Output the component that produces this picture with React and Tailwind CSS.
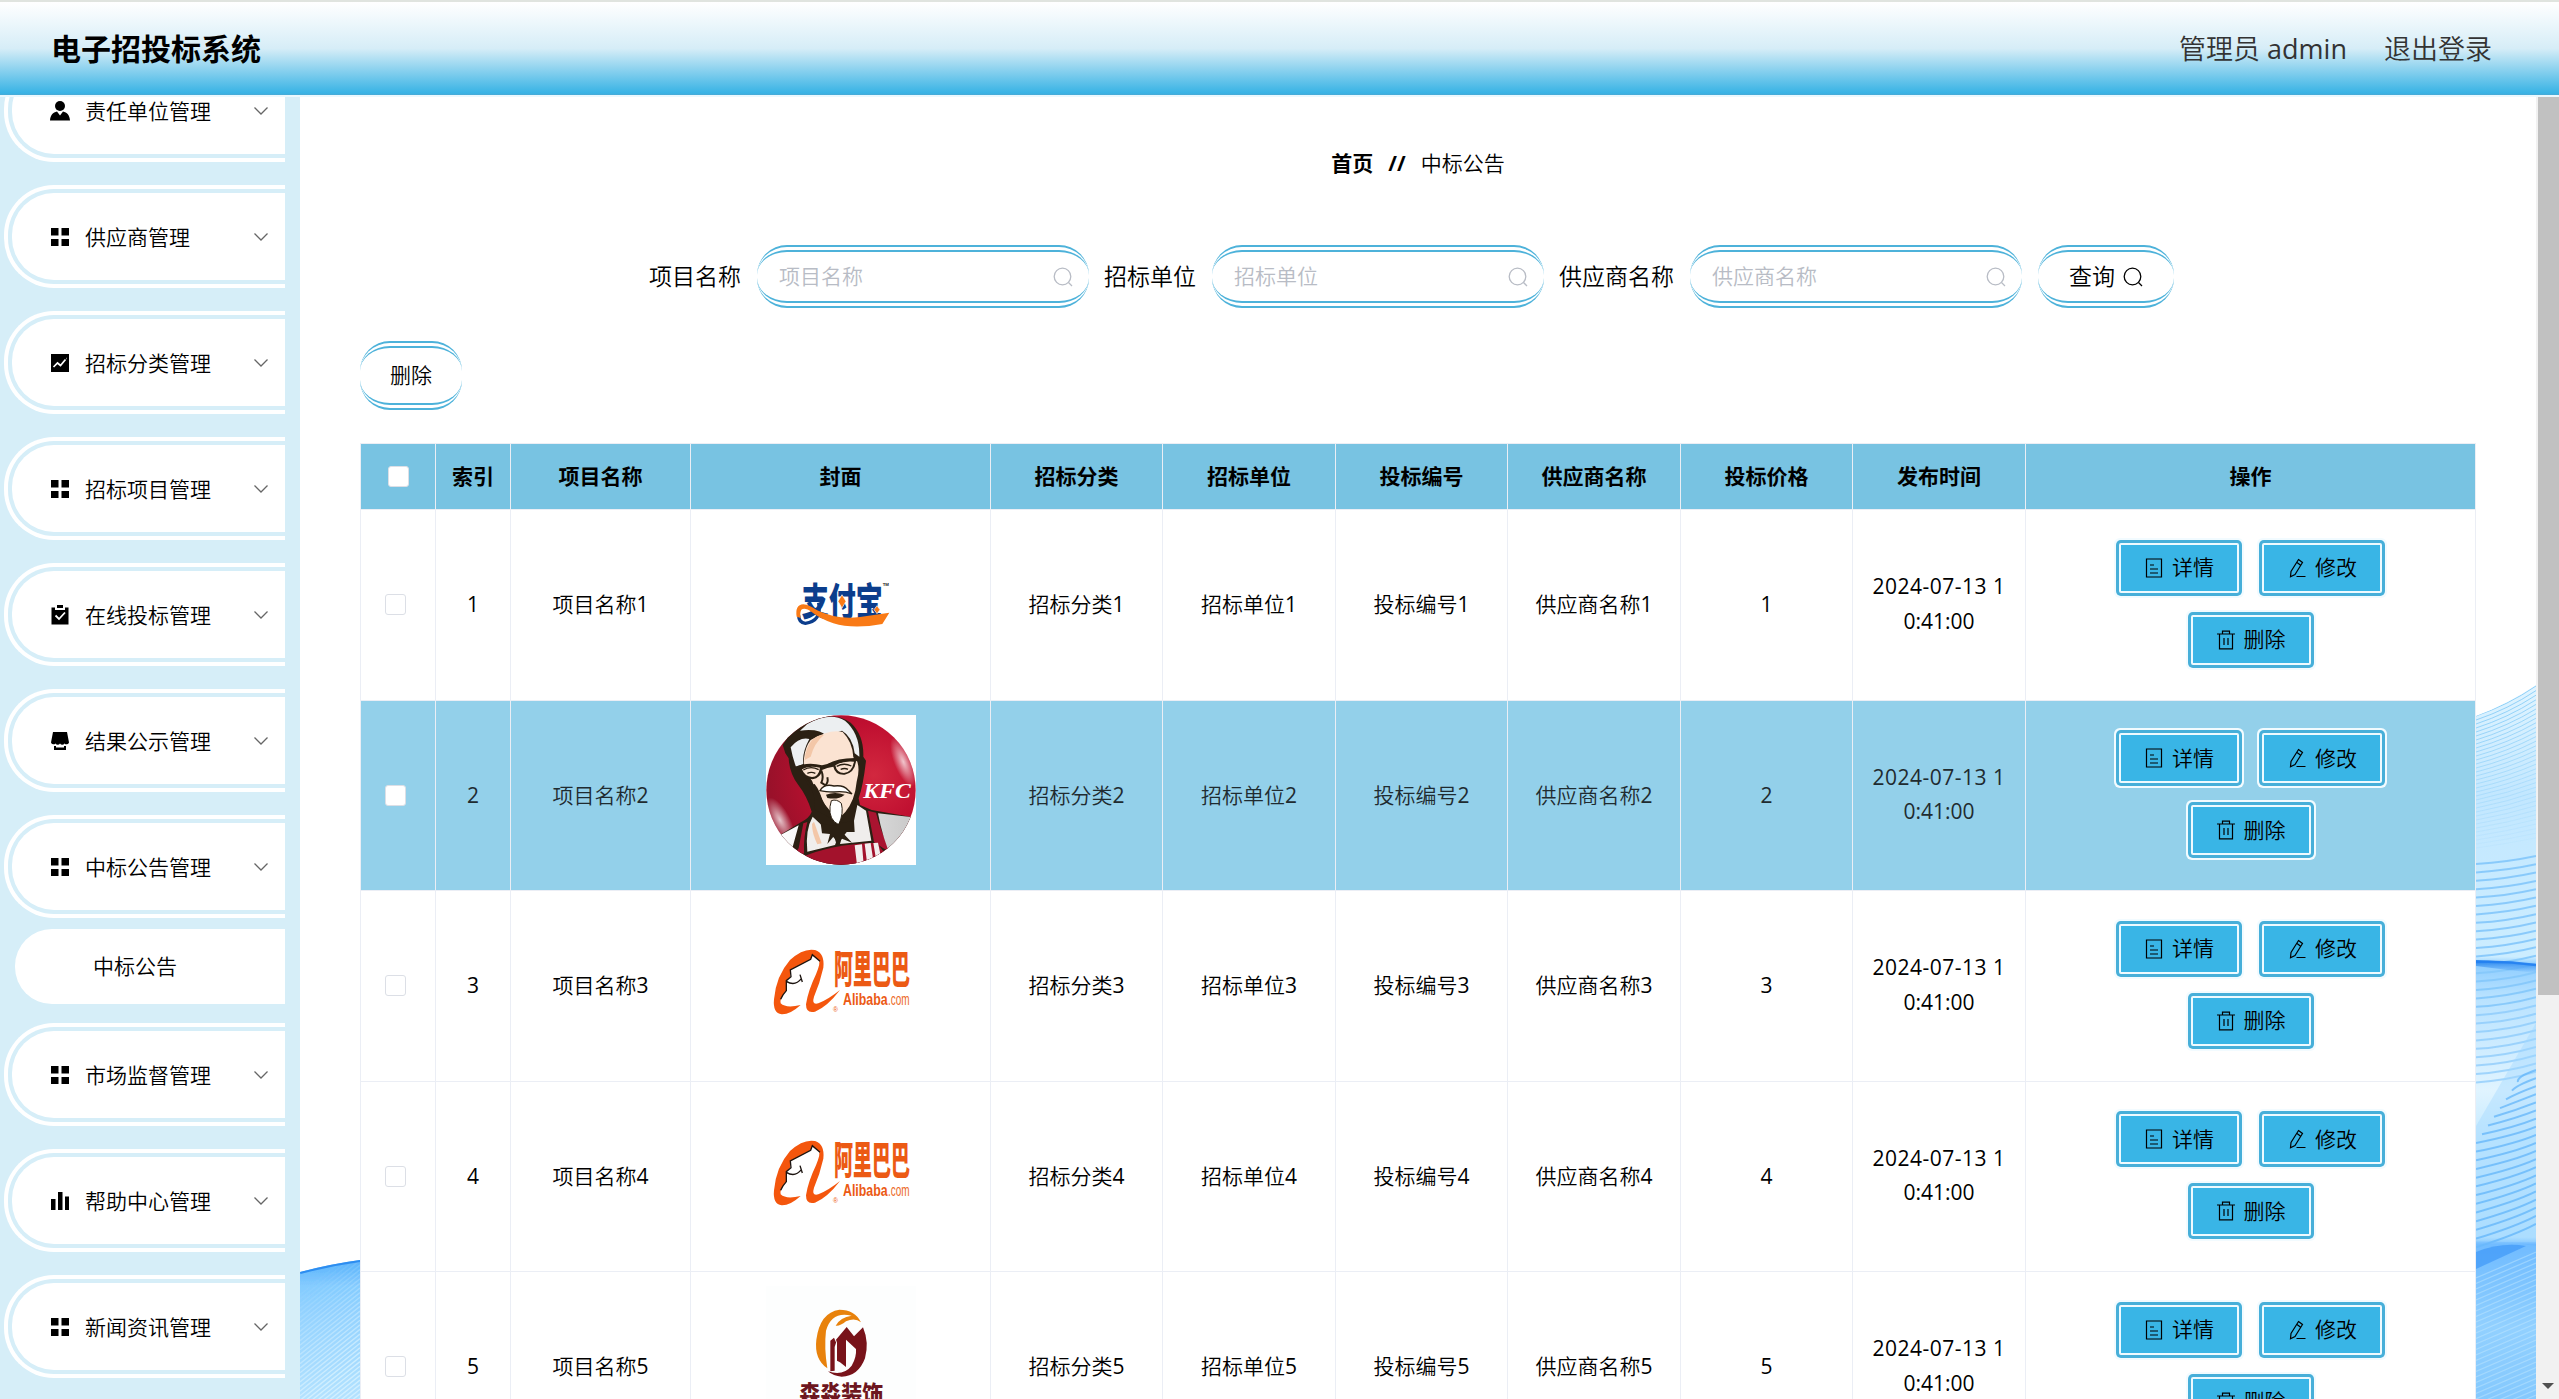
import React from "react";

const MENU = [
  { label: "责任单位管理", icon: "user" },
  { label: "供应商管理", icon: "grid" },
  { label: "招标分类管理", icon: "trend" },
  { label: "招标项目管理", icon: "grid" },
  { label: "在线投标管理", icon: "claim" },
  { label: "结果公示管理", icon: "shop" },
  { label: "中标公告管理", icon: "grid", child: "中标公告" },
  { label: "市场监督管理", icon: "grid" },
  { label: "帮助中心管理", icon: "bars" },
  { label: "新闻资讯管理", icon: "grid" },
];

const HEADERS = ["索引", "项目名称", "封面", "招标分类", "招标单位", "投标编号", "供应商名称", "投标价格", "发布时间", "操作"];
const COVERS = [AlipayLogo, KfcLogo, AlibabaLogo, AlibabaLogo, DecorLogo];

function MenuIcon({ name }) {
  return (
    <svg viewBox="0 0 20 20" className="h-5 w-5 shrink-0" fill="#000">
      {name === "user" && (
        <>
          <circle cx="10" cy="5" r="5" />
          <path d="M0 19.5C.3 14 3 11.400 7 10.500l3 4 3-4c4 .9 6.700 3.500 7 9z" />
        </>
      )}
      {name === "grid" && <path d="M1 1h7.500v7.500H1zM11.500 1H19v7.500h-7.500zM1 12h7.500v7H1zM11.500 12H19v7h-7.500z" />}
      {name === "trend" && (
        <>
          <path d="M1 1h18v18H1z" />
          <path d="M3.500 14l4-4 3 2.500 5-6M16 5.500h.5" fill="none" stroke="#fff" strokeWidth="1.700" />
        </>
      )}
      {name === "claim" && (
        <>
          <path d="M1.500 2.500H5V5h10V2.500h3.500V19.500h-17zM7 0h6v3H7z" />
          <path d="M5.500 10.500l3.500 3.500 6-6.500" fill="none" stroke="#fff" strokeWidth="1.800" />
        </>
      )}
      {name === "shop" && (
        <>
          <path d="M3 1h14l2 10.500a2.700 2.700 0 01-4.500 1 2.700 2.700 0 01-4.500 0 2.700 2.700 0 01-4.500 0 2.700 2.700 0 01-4.500-1z" />
          <path d="M4 15h2v1.500h8V15h2v4H4z" />
        </>
      )}
      {name === "bars" && <path d="M1 8h4.500v11H1zM8 1h4.500v18H8zM15 5.500h4V19h-4z" />}
    </svg>
  );
}

function SearchIcon({ className }) {
  return (
    <svg viewBox="0 0 20 20" className={className} fill="none" stroke="currentColor" strokeWidth="1.300">
      <circle cx="9.500" cy="9.500" r="8.300" />
      <path d="M15.500 15.500l3.500 3.500" />
    </svg>
  );
}

function ActionIcon({ name }) {
  return (
    <svg viewBox="0 0 20 20" className="h-5 w-5 shrink-0" fill="none" stroke="currentColor" strokeWidth="1.200">
      {name === "detail" && <path d="M2.500 1h15v18h-15zM6 7h4M6 11h8M6 15h8" />}
      {name === "edit" && <path d="M11.500 1.500l4 3-7.500 12-4.500 2.300.5-5.300zM10 4.500l4 3M9.500 18.500h9" />}
      {name === "delete" && <path d="M1 4h18M6.500 4V1.200h7V4M3.500 4v14.800h13V4M8 8v7M12 8v7" />}
    </svg>
  );
}

function AlipayLogo() {
  return (
    <svg viewBox="138 -46 450 450" className="h-[150px] w-[150px]">
      <text x="245" y="0" transform="translate(0 228) scale(1 1.12)" textLength="243" lengthAdjust="spacingAndGlyphs" fontSize="102" fontWeight="900" fill="#0b3d8c" fontFamily="Noto Sans CJK SC, sans-serif">支付宝</text>
      <path d="M296 190Q306 246 256 252Q236 250 236 228" fill="none" stroke="#0b3d8c" strokeWidth="10" />
      <path d="M230 232Q224 197 250 195Q268 197 290 212Q350 242 420 233L508 220L487 254Q400 270 340 252Q300 238 275 218Q255 203 244 211Q239 220 242 236Z" fill="#f97a16" />
      <path d="M366 166l12 20-12 20-12-20zM471 199l9 12-9 12-9-12z" fill="#f97a16" stroke="#fff" strokeWidth="2" />
      <text x="488" y="139" fontSize="13" fontWeight="700" fill="#222" fontFamily="Liberation Sans, sans-serif">TM</text>
    </svg>
  );
}

function KfcLogo() {
  return (
    <svg viewBox="138 525 450 450" className="h-[150px] w-[150px] bg-white">
      <defs>
        <radialGradient id="kfcRed" cx="0.72" cy="0.4" r="0.7">
          <stop offset="0" stopColor="#d2283f" />
          <stop offset="0.5" stopColor="#bf0f30" />
          <stop offset="1" stopColor="#99112a" />
        </radialGradient>
        <linearGradient id="kfcShirt" x1="0" x2="1">
          <stop offset="0" stopColor="#fff" />
          <stop offset="1" stopColor="#c9c9c9" />
        </linearGradient>
        <radialGradient id="kfcShine" cx="0.5" cy="0.5" r="0.5">
          <stop offset="0" stopColor="#fff" stopOpacity="0.75" />
          <stop offset="1" stopColor="#fff" stopOpacity="0" />
        </radialGradient>
        <clipPath id="kfcClip"><circle cx="363" cy="750" r="224" /></clipPath>
      </defs>
      <g clipPath="url(#kfcClip)">
        <rect x="138" y="525" width="450" height="450" fill="url(#kfcRed)" />
        <ellipse cx="550" cy="665" rx="28" ry="80" fill="url(#kfcShine)" transform="rotate(-22 550 665)" />
        <ellipse cx="180" cy="840" rx="30" ry="75" fill="url(#kfcShine)" transform="rotate(-28 180 840)" />
        <path d="M188 615Q215 565 272 538Q345 515 392 548Q432 585 430 650L438 662Q430 735 416 775L420 795L455 810L578 832V975H180V885L240 848Q268 835 275 815Q262 770 235 735Q208 700 206 655L196 640Z" fill="#2b2013" />
        <path d="M262 552Q330 514 375 542Q420 580 418 650L404 640Q398 590 366 572L318 588Q300 565 240 572Z" fill="#eceff1" />
        <path d="M212 622Q238 590 268 597Q245 640 250 672L228 680Q218 655 212 622Z" fill="#eef0f1" />
        <path d="M272 600Q330 566 368 576Q398 606 400 652L412 665Q420 690 410 725Q405 780 376 816L350 842L318 800L300 765Q282 740 276 722Q248 690 252 655Q256 620 272 600Z" fill="#fbe3d2" />
        <path d="M276 600Q290 585 312 584Q282 610 272 650L254 660Q256 625 276 600Z" fill="#f3c7a8" />
        <path d="M222 682Q262 664 306 676L322 672Q355 652 415 654V660L408 664Q404 698 374 704Q346 706 340 680L322 684L306 690Q302 714 278 718Q244 716 240 690L226 688Z" fill="#2b2013" />
        <path d="M246 688Q264 676 300 683Q296 710 276 711Q254 710 246 688ZM346 676Q368 662 402 665Q396 697 372 699Q350 699 346 676Z" fill="#fbe3d2" />
        <path d="M250 690q22-14 46-1M350 679q22-12 44-1M262 700q12-6 24 0M362 688q12-5 22 0" stroke="#2b2013" strokeWidth="4" fill="none" />
        <path d="M304 692Q312 712 304 728L316 736Q326 728 322 712M258 718L284 760" stroke="#2b2013" strokeWidth="6" fill="none" />
        <path d="M284 732Q300 752 308 785L330 812L345 842L316 826L282 808Q288 770 270 735Z" fill="#2b2013" />
        <path d="M300 752Q312 730 342 738Q370 734 384 750L396 762Q372 752 342 756Q316 756 300 752Z" fill="#fff" stroke="#2b2013" strokeWidth="4" />
        <path d="M318 764Q345 754 374 764Q355 780 322 774Z" fill="#2b2013" />
        <path d="M334 782Q350 776 364 790Q372 820 356 854Q326 840 330 800Z" fill="#fff" stroke="#2b2013" strokeWidth="3" />
        <path d="M278 830L318 868L350 902L345 915L262 935Q255 870 278 830ZM412 795L438 812L454 902L360 912L365 895L400 852Z" fill="#f0eeec" />
        <path d="M282 845L305 910L292 913Q276 880 276 852Z" fill="#f3c7a8" />
        <path d="M302 850L340 858L358 850L402 842L404 876L366 876L396 908L366 896L350 914L342 888L322 912L330 882L306 880Z" fill="#2b2013" />
        <path d="M444 812L468 818Q478 860 510 935L490 925L462 906ZM250 850L262 846Q250 890 252 940L200 975L236 925Z" fill="#a91430" />
        <path d="M474 820L578 832V975H522Q486 890 474 820ZM180 886L236 856L214 935L190 925Z" fill="url(#kfcShirt)" />
        <path d="M240 954Q330 912 470 908L522 975H240Z" fill="#a3122c" />
        <path d="M404 916l22-3 5 62h-20zM434 911l18-2 10 66h-20zM460 909l14-1 14 67h-17z" fill="#f2eded" />
      </g>
      <text x="430" y="775" textLength="142" lengthAdjust="spacingAndGlyphs" fontSize="64" fontWeight="700" fontStyle="italic" fill="#fff" fontFamily="Liberation Serif, serif">KFC</text>
    </svg>
  );
}

function AlibabaLogo() {
  return (
    <svg viewBox="78 -43 450 450" className="h-[150px] w-[150px]">
      <path d="M182 257Q150 286 125 285Q98 282 102 240Q108 170 150 122Q190 85 225 92Q255 102 250 145Q240 190 222 232Q214 258 235 252Q265 240 300 212Q262 262 225 277Q198 284 198 255Q204 215 228 165Q243 128 236 122L216 108L212 120L151 152L150 172L138 185L140 212Q118 238 122 252Q138 268 182 257Z" fill="#f4560d" />
      <path d="M240 126L217 106L212 120L151 152L153 172L139 184V214Q128 226 122 240M139 186Q165 202 184 178M180 166L187 188" fill="none" stroke="#1c1410" strokeWidth="4" />
      <text x="282" y="0" textLength="228" lengthAdjust="spacingAndGlyphs" fontSize="70" fontWeight="900" fill="#ec5a14" fontFamily="Noto Sans CJK SC, sans-serif" transform="translate(0 191) scale(1 1.65)">阿里巴巴</text>
      <text x="309" y="258" textLength="134" lengthAdjust="spacingAndGlyphs" fontSize="52" fontWeight="700" fill="#ec5a14" fontFamily="Liberation Sans, sans-serif">Alibaba</text>
      <text x="444" y="258" textLength="65" lengthAdjust="spacingAndGlyphs" fontSize="52" fill="#ec6a28" fontFamily="Liberation Sans, sans-serif">.com</text>
      <text x="279" y="277" fontSize="20" fill="#ec5a14" fontFamily="Liberation Sans, sans-serif">®</text>
    </svg>
  );
}

function DecorLogo() {
  return (
    <svg viewBox="78 1101 450 450" className="h-[150px] w-[150px] bg-[#fdfefe]">
      <path d="M262 1348Q222 1320 229 1262Q240 1180 298 1172Q345 1172 363 1210Q345 1195 318 1207Q300 1222 287 1220Q300 1195 335 1190Q275 1175 258 1235Q252 1285 262 1348Z" fill="#e8820c" />
      <path d="M271 1265L282 1256L288 1270V1262L320 1224L342 1252L369 1225Q388 1270 375 1318Q355 1372 305 1373Q280 1372 264 1357Q310 1372 335 1340Q350 1315 348 1290L318 1262V1344L300 1330L291 1325V1262L284 1284V1355L271 1357Z" fill="#78131a" />
      <text x="178" y="1448" textLength="252" lengthAdjust="spacingAndGlyphs" fontSize="68" fontWeight="900" fill="#6d1620" fontFamily="Noto Sans CJK SC, sans-serif">森淼装饰</text>
    </svg>
  );
}

/* Strip of the wave wallpaper that shows to the right of the table. */
function RightWave() {
  const fine = Array.from({ length: 34 }, (_, i) => i);
  const mid = Array.from({ length: 27 }, (_, i) => i);
  const steep = Array.from({ length: 20 }, (_, i) => i);
  const low = Array.from({ length: 30 }, (_, i) => i);
  return (
    <svg viewBox="0 0 60 719" preserveAspectRatio="none" className="absolute right-0 bottom-0 h-[719px] w-[60px]">
      <defs>
        <linearGradient id="waveR" x1="0" y1="0" x2="0" y2="1">
          <stop offset="0" stopColor="#e2f5ff" />
          <stop offset="0.16" stopColor="#c2e7ff" />
          <stop offset="0.385" stopColor="#ccedff" />
          <stop offset="0.395" stopColor="#8ecdff" />
          <stop offset="0.44" stopColor="#b8e2ff" />
          <stop offset="0.57" stopColor="#e0f4ff" />
          <stop offset="0.64" stopColor="#c4e9ff" />
          <stop offset="0.775" stopColor="#b4e2ff" />
          <stop offset="0.785" stopColor="#6db9ff" />
          <stop offset="0.85" stopColor="#84c8ff" />
          <stop offset="0.9" stopColor="#9ed8ff" />
          <stop offset="1" stopColor="#8accfd" />
        </linearGradient>
        <linearGradient id="waveDark" x1="0" y1="0" x2="0" y2="1">
          <stop offset="0" stopColor="#2a86ef" />
          <stop offset="1" stopColor="#2a86ef" stopOpacity="0" />
        </linearGradient>
        <clipPath id="waveRClip"><path d="M0 36Q32 24 60 5V719H0Z" /></clipPath>
      </defs>
      <g clipPath="url(#waveRClip)" fill="none">
        <rect width="60" height="719" fill="url(#waveR)" />
        {fine.map((i) => (
          <path key={i} d={`M0 ${36 + i * 4}Q32 ${25 + i * 4.2} 60 ${6 + i * 4.6}`} stroke="#8fd0f8" strokeWidth="1" opacity={1 - i * 0.027} />
        ))}
        {mid.map((i) => (
          <path key={i} d={`M0 ${184 + i * 8.4}Q32 ${182 + i * 8.4} 60 ${176 + i * 8.3}`} stroke="#86c8fb" strokeWidth="2" opacity={i > 17 ? 0.7 : 0.95} />
        ))}
        <path d="M0 280Q30 281 60 284V293Q30 290 0 286Z" fill="url(#waveDark)" />
        <path d="M0 282Q30 281 60 285" stroke="#1f7df0" strokeWidth="2.500" opacity="0.8" />
        <path d="M60 343L0 446V562H60Z" fill="#9fd6ff" opacity="0.4" />
        {steep.map((i) => (
          <path key={i} d={`M${Math.max(0, 42 - i * 6)} ${402 + i * 8.7}Q40 ${397 + i * 8.3} 60 ${390 + i * 8.1}`} stroke="#5cb2fa" strokeWidth="2" opacity="0.7" />
        ))}
        <path d="M0 561Q30 561 60 566V719H0Z" fill="#7cc3ff" opacity="0.35" />
        <path d="M0 572Q25 562 50 566L0 589Z" fill="#3b95f8" opacity="0.65" />
        {low.map((i) => (
          <path key={i} d={`M0 ${598 + i * 5.5}L60 ${572 + i * 5.5}`} stroke="#c3e8ff" strokeWidth="1.300" opacity="0.45" />
        ))}
      </g>
    </svg>
  );
}

/* Strip of the wave wallpaper that shows to the left of the table. */
function LeftWave() {
  const lines = Array.from({ length: 52 }, (_, i) => i);
  return (
    <svg viewBox="0 0 60 139" className="absolute bottom-0 left-0 h-[139px] w-[60px]">
      <defs>
        <linearGradient id="waveL" x1="0" y1="0" x2="0" y2="1">
          <stop offset="0" stopColor="#5cb3fb" />
          <stop offset="0.2" stopColor="#8aceff" />
          <stop offset="1" stopColor="#b4e2ff" />
        </linearGradient>
        <clipPath id="waveLClip"><path d="M0 12Q30 4 60 0V139H0Z" /></clipPath>
      </defs>
      <g clipPath="url(#waveLClip)">
        <rect width="60" height="139" fill="url(#waveL)" />
        {lines.map((i) => (
          <path key={i} d={`M0 ${30 + i * 4.6}L60 ${-18 + i * 4.6}`} stroke="#dcf4ff" strokeWidth="1.400" opacity={Math.min(0.75, i * 0.03)} />
        ))}
        <path d="M0 12Q30 4 60 0" fill="none" stroke="#2d8df0" strokeWidth="4" />
      </g>
    </svg>
  );
}

function Sidebar() {
  return (
    <aside className="h-full w-[300px] shrink-0 overflow-hidden bg-[#d6eef8]">
      <ul className="-mt-[38px] flex w-[285px] flex-col">
        {MENU.map((m) => (
          <li key={m.label} className="mb-[23px] pl-1">
            <div className="h-[103px] rounded-l-[50px] border-4 border-r-0 border-white py-1 pl-1">
              <div className="flex h-full items-center rounded-l-[42px] bg-white pr-[17px] pl-[38px]">
                <MenuIcon name={m.icon} />
                <span className="ml-[15px] grow text-[21px] leading-8">{m.label}</span>
                <svg viewBox="0 0 14 8" className="h-2 w-3.5" fill="none" stroke="#666" strokeWidth="1.300">
                  <path d="M.5.5L7 7 13.500.5" />
                </svg>
              </div>
            </div>
            {m.child && (
              <div className="mt-[11px] -mb-1 ml-[11px] flex h-[75px] items-center rounded-l-[37px] bg-white pl-[78px] text-[21px]">{m.child}</div>
            )}
          </li>
        ))}
      </ul>
    </aside>
  );
}

function SearchField({ label }) {
  return (
    <label className="flex items-center">
      <span className="mr-4 text-[23px]">{label}</span>
      <span className="mr-[15px] flex h-[63px] w-[332px] items-center justify-between rounded-[30px] border-x-0 border-y-[7px] border-double border-[#4db2da] bg-white pr-4 pl-[22px] text-[21px] text-[#b8bcc5]">
        {label}
        <SearchIcon className="h-5 w-5" />
      </span>
    </label>
  );
}

function Checkbox() {
  return <span className="block h-[21px] w-[21px] rounded-[3px] border border-[#dcdfe6] bg-white" />;
}

function ActionButton({ icon, children }) {
  return (
    <button className="flex h-[50px] w-[120px] items-center justify-center gap-2 rounded-[2px] border-2 border-[#eefaff] bg-[#39b5e6] text-[21px] shadow-[0_0_0_3px_#47afd9,0_0_0_5px_#f2fbff]">
      <ActionIcon name={icon} />
      {children}
    </button>
  );
}

const COLS = "grid grid-cols-[75px_75px_180px_300px_172px_173px_172px_173px_172px_173px_450px]";
const CELL = "flex items-center justify-center border-r border-b border-[#ebeef5]";

function NumberedCell({ text, n }) {
  return (
    <div className={CELL}>
      {text}
      <span className="font-normal">{n}</span>
    </div>
  );
}

function Table() {
  return (
    <div className="w-[2116px] border-t border-l border-[#ebeef5] bg-white text-[21px]">
      <div className={`${COLS} h-[66px] bg-[#78c3e2] font-bold`}>
        <div className={CELL}><Checkbox /></div>
        {HEADERS.map((h) => <div key={h} className={CELL}>{h}</div>)}
      </div>
      {COVERS.map((Cover, i) => {
        const n = i + 1;
        return (
          <div key={n} className={`${COLS} h-[190.500px] ${i === 1 ? "bg-[#93d0ea] text-[#1f2b30]" : "bg-white"}`}>
            <div className={`${CELL} pr-1.5`}><Checkbox /></div>
            <NumberedCell n={n} />
            <NumberedCell text="项目名称" n={n} />
            <div className={`${CELL} pb-[11px]`}><Cover /></div>
            <NumberedCell text="招标分类" n={n} />
            <NumberedCell text="招标单位" n={n} />
            <NumberedCell text="投标编号" n={n} />
            <NumberedCell text="供应商名称" n={n} />
            <NumberedCell n={n} />
            <div className={`${CELL} flex-col pb-0.5 text-center leading-[34.500px] font-normal`}>
              <span className="tracking-[0.500px] whitespace-nowrap">2024-07-13 1</span>
              <span>0:41:00</span>
            </div>
            <div className={`${CELL} flex-wrap content-center gap-x-[23px] gap-y-[22px] px-20 pb-0.5 text-black`}>
              <ActionButton icon="detail">详情</ActionButton>
              <ActionButton icon="edit">修改</ActionButton>
              <ActionButton icon="delete">删除</ActionButton>
            </div>
          </div>
        );
      })}
    </div>
  );
}

export default function App() {
  return (
    <div className="flex h-[1399px] w-[2559px] flex-col overflow-hidden bg-white font-['Open_Sans','Noto_Sans_CJK_SC',sans-serif] font-[350] text-black">
      <header className="flex h-[97px] shrink-0 items-center justify-between border-t-2 border-b-2 border-t-[#e0e4df] border-b-[#eaf8fe] bg-[linear-gradient(180deg,#ffffff_0%,#d6edf7_50%,#38b3e5_98%,#4aa9d4_100%)] bg-clip-padding pr-[67px] pl-[51px]">
        <h1 className="text-[30px] font-bold">电子招投标系统</h1>
        <div className="flex gap-[37px] pt-0.5 text-[27px] text-[#333]">
          <span>管理员 <span className="font-normal">admin</span></span>
          <span>退出登录</span>
        </div>
      </header>
      <div className="flex min-h-0 grow">
        <Sidebar />
        <main className="relative grow overflow-hidden">
          <RightWave />
          <LeftWave />
          <div className="relative flex flex-col pl-[60px]">
            <nav className="mt-[51px] flex h-8 w-[2116px] items-center justify-center text-[21px]">
              <b>首页</b>
              <b className="mx-[15px]">//</b>
              <span>中标公告</span>
            </nav>
            <div className="mt-[65px] ml-[289px] flex items-center">
              <SearchField label="项目名称" />
              <SearchField label="招标单位" />
              <SearchField label="供应商名称" />
              <button className="ml-px flex h-[63px] w-[136px] items-center justify-center gap-2 rounded-[30px] border-x-0 border-y-[7px] border-double border-[#4db2da] bg-white text-[23px]">
                查询
                <SearchIcon className="h-5 w-5" />
              </button>
            </div>
            <button className="mt-[33px] mb-[33px] h-[69px] w-[102px] rounded-[30px] border-x-0 border-y-[7px] border-double border-[#4db2da] bg-white text-[21px]">删除</button>
            <Table />
          </div>
        </main>
        <div className="flex w-[23px] shrink-0 flex-col items-end justify-between bg-[#f1f1f1]">
          <div className="h-[898px] w-[21px] bg-[#c1c1c1]" />
          <svg viewBox="0 0 12 6" className="mr-[5px] mb-2.5 h-1.5 w-3" fill="#505050"><path d="M0 0h12L6 6z" /></svg>
        </div>
      </div>
    </div>
  );
}
